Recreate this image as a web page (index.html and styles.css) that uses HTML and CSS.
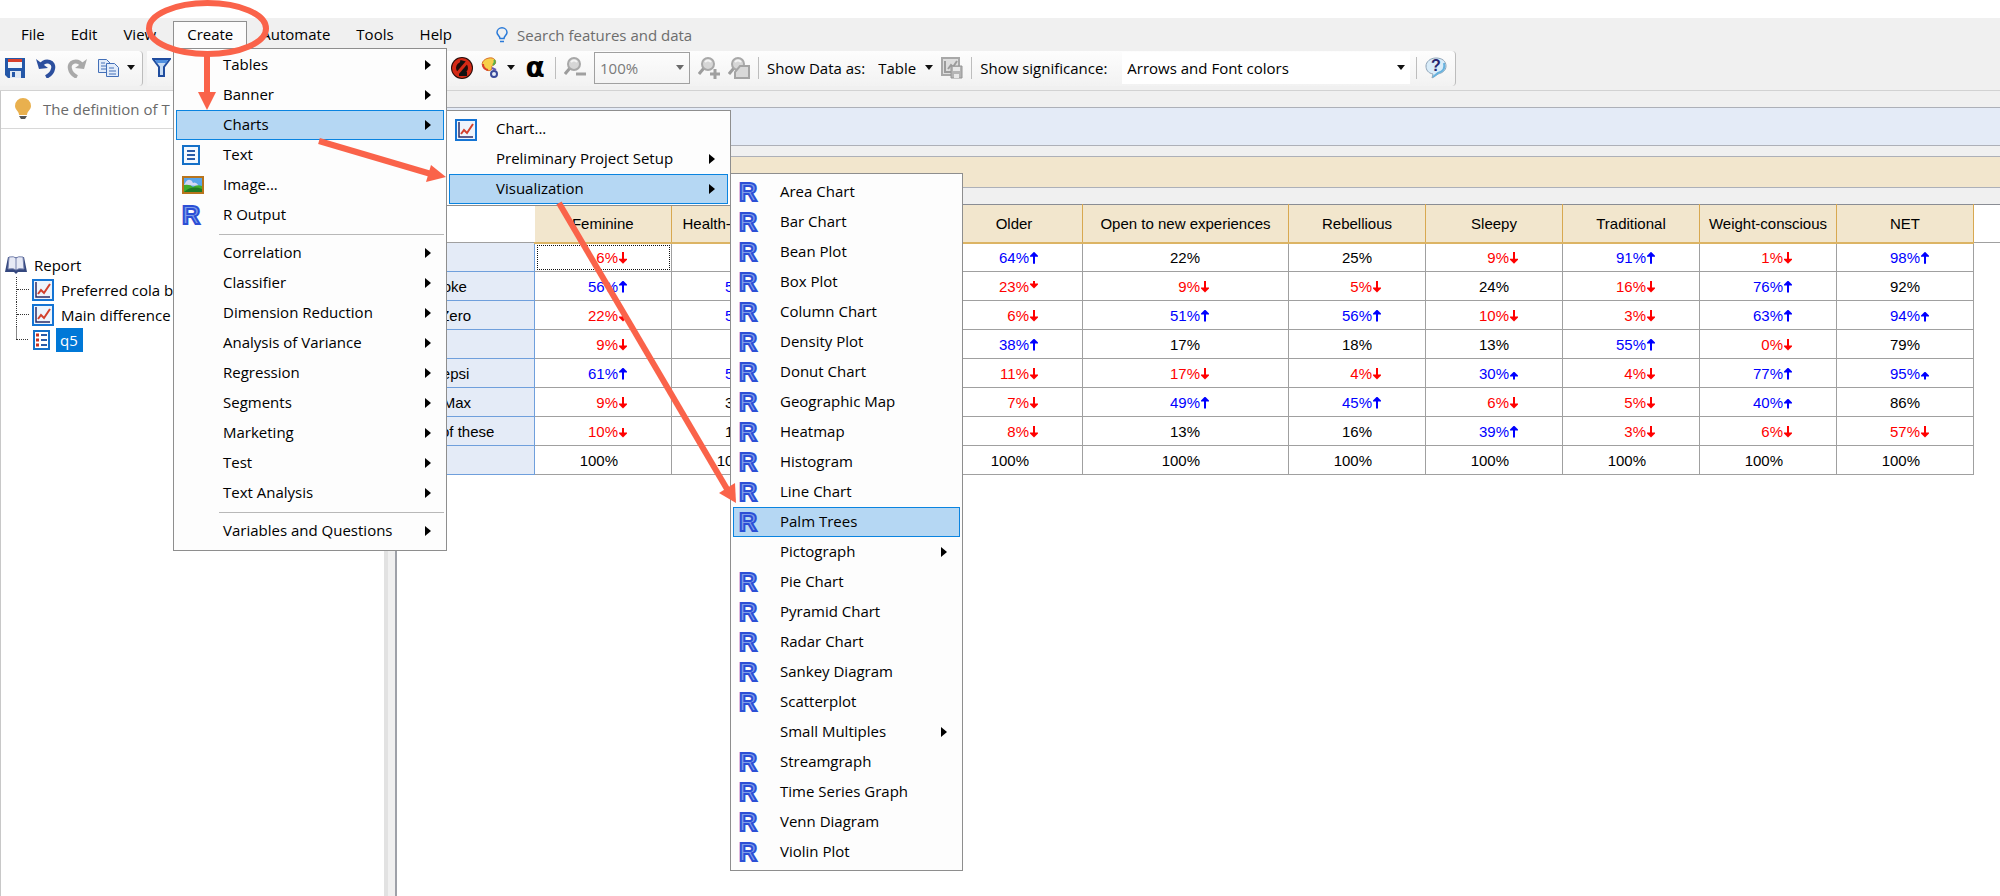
FILE: index.html
```html
<!DOCTYPE html>
<html lang="en">
<head>
    <meta charset="UTF-8">
    <meta name="viewport" content="width=device-width, initial-scale=1.0">
    <title>Report - q5</title>
    <link rel="stylesheet" href="styles.css">
</head>
<body>
    <!-- shared icons -->
    <svg class="sprite" aria-hidden="true">
        <symbol id="icon-r" viewBox="0 0 20 20">
            <text x="0" y="19" font-family="Liberation Sans" font-weight="bold" font-size="25" fill="#7f9fe8" stroke="#2c4fd6" stroke-width="2">R</text>
        </symbol>
        <symbol id="icon-chart" viewBox="0 0 22 22">
            <rect x="1" y="1" width="20" height="20" fill="#eef4fc" stroke="#1474d4" stroke-width="2"/>
            <path d="M4 3v15h14" fill="none" stroke="#2c2c66" stroke-width="1.5"/>
            <path d="M6 15l3-4 3 3 6-9" fill="none" stroke="#d2402c" stroke-width="2"/>
        </symbol>
        <symbol id="icon-lens" viewBox="0 0 22 22">
            <path d="M1 17l5-6" stroke="#9c9c9c" stroke-width="3"/>
            <circle cx="10" cy="7" r="6" fill="#d6d6d6" stroke="#a8a8a8" stroke-width="2"/>
            <path d="M7 5q3-3 6 0" fill="none" stroke="#f4f4f4" stroke-width="2"/>
        </symbol>
    </svg>

    <div class="app">
        <nav class="menubar">
            <button>File</button>
            <button>Edit</button>
            <button>View</button>
            <button class="open">Create</button>
            <button>Automate</button>
            <button>Tools</button>
            <button>Help</button>
            <label class="search">
                <svg width="12" height="16" viewBox="0 0 12 16" fill="none" stroke="#2a7ad8" stroke-width="1.5"><path d="M4 11.500C4 9 1 8 1 5.500a5 4.700 0 0 1 10 0C11 8 8 9 8 11.500z"/><path d="M4 14.500h4"/></svg>
                <input type="text" placeholder="Search features and data" aria-label="Search features and data">
            </label>
        </nav>

        <div class="toolbar">
            <div class="strip strip-edit">
                <button aria-label="Save">
                    <svg width="20" height="20" viewBox="0 0 20 20"><path d="M0 0h20v20H3l-3-3z" fill="#2558a8"/><path d="M3 1h14v9H3z" fill="#f2f6fc"/><path d="M3 1h14v3H3z" fill="#d8402c"/><path d="M5 13h11v7H5z" fill="#dfe8f4"/><path d="M7 14h3v5H7z" fill="#2558a8"/></svg>
                </button>
                <button aria-label="Undo">
                    <svg width="20" height="20" viewBox="0 0 20 20"><path d="M4 8c6-8 15-4 13 3q-1 5-7 8" fill="none" stroke="#2c4f9e" stroke-width="4"/><path d="M0 1l3 10 9-1z" fill="#2c4f9e"/></svg>
                </button>
                <button aria-label="Redo">
                    <svg width="20" height="20" viewBox="0 0 20 20"><path d="M16 8C10 0 1 4 3 11q1 5 7 8" fill="none" stroke="#a9a9a9" stroke-width="4"/><path d="M20 1l-3 10-9-1z" fill="#a9a9a9"/></svg>
                </button>
                <button aria-label="Copy">
                    <svg width="21" height="20" viewBox="0 0 21 20" fill="#e2ecfa" stroke="#4470b8"><path d="M.5 1.500h8l4 4v9H.5z"/><path d="M3 5h4M3 8h6M3 11h6"/><path d="M8.500 5.500h8l4 4v9h-12z"/><path d="M11 10h5M11 13h7M11 16h7"/></svg>
                </button>
                <button class="caret" aria-label="Copy options"></button>
            </div>
            <div class="strip strip-data">
                <button aria-label="Filter">
                    <svg width="19" height="20" viewBox="0 0 19 20"><path d="M1 1h17l-6 8v9H7V9z" fill="#c6dbf4" stroke="#1f4c9e" stroke-width="2"/><path d="M3 2h13l-2 3H5z" fill="#4f8fe0"/></svg>
                </button>
                <div class="hidden-tools"></div>
                <button aria-label="Hide">
                    <svg width="22" height="22" viewBox="0 0 22 22"><circle cx="11" cy="11" r="11" fill="#240a08"/><circle cx="11" cy="11" r="8" fill="none" stroke="#d42a16" stroke-width="4"/><path d="M9 5l4 1v11M8 17h8" fill="none" stroke="#111" stroke-width="4"/><path d="M17 4L5 18" stroke="#d42a16" stroke-width="3"/></svg>
                </button>
                <button aria-label="Colors">
                    <svg width="18" height="22" viewBox="0 0 18 22"><path d="M8 1c5-1 8 3 6 6-2 2-4 1-3 4 0 3-5 4-8 0-4-4-1-9 5-10z" fill="#f7cf4a" stroke="#d8702a"/><path d="M2 7q0 5 5 6" fill="none" stroke="#d8402c" stroke-width="2"/><path d="M13 3q2 2-1 5" fill="none" stroke="#58b04a" stroke-width="2"/><circle cx="13" cy="17" r="3" fill="#e8eef8" stroke="#3a4a9a" stroke-width="2"/><path d="M11 11l4 2" stroke="#6a58b0" stroke-width="2"/></svg>
                </button>
                <button class="caret" aria-label="Color options"></button>
                <button class="alpha" aria-label="Significance">α</button>
                <i class="sep"></i>
                <button aria-label="Zoom out">
                    <svg width="22" height="22"><use href="#icon-lens"/><path d="M12 17h10" stroke="#a0a0a0" stroke-width="3"/></svg>
                </button>
                <span class="select zoom">
                    <select aria-label="Zoom" disabled><option>100%</option></select>
                </span>
                <button aria-label="Zoom in">
                    <svg width="22" height="22"><use href="#icon-lens"/><path d="M12 17h10M17 12v10" stroke="#a0a0a0" stroke-width="3"/></svg>
                </button>
                <button aria-label="Zoom to selection">
                    <svg width="22" height="22"><use href="#icon-lens"/><path d="M12 9h9v12H7v-6z" fill="#d8d8d8" stroke="#a4a4a4" stroke-width="2"/></svg>
                </button>
                <i class="sep"></i>
                <label for="showAs">Show Data as:</label>
                <span class="select show-as">
                    <select id="showAs"><option>Table</option></select>
                </span>
                <button aria-label="Save chart">
                    <svg width="22" height="22" viewBox="0 0 22 22"><path d="M1 1h17v17H1z" fill="#dedede" stroke="#a8a8a8" stroke-width="2"/><path d="M4 4v11h6M7 12l3-4 2 2 4-6" fill="none" stroke="#9c9c9c" stroke-width="2"/><path d="M10 9h11v12H10z" fill="#b4b4b4" stroke="#949494"/><path d="M12 10h7v4h-7zM13 17h5v4h-5z" fill="#e8e8e8"/></svg>
                </button>
                <i class="sep"></i>
                <label for="significance">Show significance:</label>
                <span class="select significance">
                    <select id="significance"><option>Arrows and Font colors</option></select>
                </span>
                <i class="sep"></i>
                <button aria-label="Help">
                    <svg width="22" height="22" viewBox="0 0 22 22"><path d="M11 1c6 0 10 3 10 8s-4 7-8 8l-6 4 1-4c-5-1-7-4-7-8s4-8 10-8z" fill="#d9ecf9" stroke="#8fa4b8"/><path d="M19 6q2 8-6 10l-5 4" fill="none" stroke="#67b2de" stroke-width="2"/><text x="11" y="14" text-anchor="middle" font-family="Liberation Sans" font-weight="bold" font-size="16" fill="#25256e">?</text></svg>
                </button>
            </div>
        </div>

        <div class="workspace">
            <aside class="report-panel">
                <div class="tip">
                    <svg width="16" height="22" viewBox="0 0 16 22"><path d="M4 17c0-4-4-5-4-9a8 8 0 0 1 16 0c0 4-4 5-4 9z" fill="#e9b04e"/><path d="M4 18h8l-2 3H6z" fill="#555"/></svg>
                    <span>The definition of T</span>
                </div>
                <div class="tree">
                    <div class="tree-root">
                        <svg width="22" height="18" viewBox="0 0 22 18"><path d="M3 1h16l3 15h-9l-2 2-2-2H0z" fill="#34477e"/><path d="M4 1q5-1 7 1 2-2 7-1l1 12q-6-1-8 1-2-2-8-1z" fill="#e6e9f5" stroke="#7480ac"/><path d="M11 2v12" stroke="#7480ac"/></svg>
                        <span>Report</span>
                    </div>
                    <ul>
                        <li><svg width="22" height="22"><use href="#icon-chart"/></svg><span>Preferred cola b</span></li>
                        <li><svg width="22" height="22"><use href="#icon-chart"/></svg><span>Main difference</span></li>
                        <li>
                            <svg width="22" height="22" viewBox="0 0 22 22"><path d="M3 2h15v18H3z" fill="#fff" stroke="#1470c8" stroke-width="2"/><path d="M5 6h3M5 11h3M5 16h3" stroke="#c8321e" stroke-width="3"/><path d="M10 6h6M10 11h6M10 16h6" stroke="#2a5ca8" stroke-width="2"/></svg>
                            <span class="selected">q5</span>
                        </li>
                    </ul>
                </div>
            </aside>
            <div class="splitter"></div>

            <main class="output">
                <div class="band band-blue"></div>
                <div class="band band-tan"></div>
                <table class="data">
                    <colgroup>
                        <col class="col-label"><col><col><col><col><col class="col-wide"><col><col><col><col><col><col class="col-rest">
                    </colgroup>
                    <thead>
                        <tr><td></td><th>Feminine</th><th>Health-conscious</th><th></th><th>Older</th><th>Open to new experiences</th><th>Rebellious</th><th>Sleepy</th><th>Traditional</th><th>Weight-conscious</th><th>NET</th><td></td></tr>
                    </thead>
                    <tbody>
                        <tr><th>Coke</th><td class="down focus">6%</td><td></td><td></td><td class="up">64%</td><td>22%</td><td>25%</td><td class="down">9%</td><td class="up">91%</td><td class="down">1%</td><td class="up">98%</td></tr>
                        <tr><th>Diet Coke</th><td class="up">56%</td><td class="up">53%</td><td></td><td class="down short">23%</td><td class="down">9%</td><td class="down">5%</td><td>24%</td><td class="down">16%</td><td class="up">76%</td><td>92%</td></tr>
                        <tr><th>Coke Zero</th><td class="down medium">22%</td><td class="up">53%</td><td></td><td class="down">6%</td><td class="up">51%</td><td class="up">56%</td><td class="down">10%</td><td class="down">3%</td><td class="up">63%</td><td class="up medium">94%</td></tr>
                        <tr><th>Pepsi</th><td class="down">9%</td><td></td><td></td><td class="up">38%</td><td>17%</td><td>18%</td><td>13%</td><td class="up">55%</td><td class="down">0%</td><td>79%</td></tr>
                        <tr><th>Diet Pepsi</th><td class="up">61%</td><td class="up">53%</td><td></td><td class="down">11%</td><td class="down">17%</td><td class="down">4%</td><td class="up short">30%</td><td class="down">4%</td><td class="up">77%</td><td class="up short">95%</td></tr>
                        <tr><th>Pepsi Max</th><td class="down">9%</td><td>33%</td><td></td><td class="down">7%</td><td class="up">49%</td><td class="up">45%</td><td class="down">6%</td><td class="down">5%</td><td class="up medium">40%</td><td>86%</td></tr>
                        <tr><th>None of these</th><td class="down medium">10%</td><td>13%</td><td></td><td class="down">8%</td><td>13%</td><td>16%</td><td class="up">39%</td><td class="down">3%</td><td class="down">6%</td><td class="down">57%</td></tr>
                        <tr><th>NET</th><td>100%</td><td>100%</td><td></td><td>100%</td><td>100%</td><td>100%</td><td>100%</td><td>100%</td><td>100%</td><td>100%</td></tr>
                    </tbody>
                </table>
            </main>
        </div>
    </div>

    <!-- Create menu -->
    <div class="menu menu-create">
        <button class="sub">Tables</button>
        <button class="sub">Banner</button>
        <button class="sub active">Charts</button>
        <button><svg width="18" height="20" viewBox="0 0 18 20"><path d="M1 1h16v18H1z" fill="#f4f9ff" stroke="#1470c8" stroke-width="2"/><path d="M5 6h8M5 10h8M5 14h8" stroke="#2a5ca8" stroke-width="2"/></svg>Text</button>
        <button><svg width="22" height="20" viewBox="0 0 22 20"><path d="M0 1h22v18H0z" fill="#b8741c"/><path d="M2 3h18v14H2z" fill="#58a4ea"/><path d="M2 10q3-6 6-5 2 0 3 3 3-2 6 3z" fill="#d4d8f4"/><path d="M2 10q6-1 9 2 4-3 9-1v6H2z" fill="#3fae2c"/><path d="M2 17q8-7 18-3v3z" fill="#1f7a24"/></svg>Image...</button>
        <button><svg width="20" height="20"><use href="#icon-r"/></svg>R Output</button>
        <hr>
        <button class="sub">Correlation</button>
        <button class="sub">Classifier</button>
        <button class="sub">Dimension Reduction</button>
        <button class="sub">Analysis of Variance</button>
        <button class="sub">Regression</button>
        <button class="sub">Segments</button>
        <button class="sub">Marketing</button>
        <button class="sub">Test</button>
        <button class="sub">Text Analysis</button>
        <hr>
        <button class="sub">Variables and Questions</button>
    </div>

    <!-- Charts submenu -->
    <div class="menu menu-charts">
        <button><svg width="22" height="22"><use href="#icon-chart"/></svg>Chart...</button>
        <button class="sub">Preliminary Project Setup</button>
        <button class="sub active">Visualization</button>
    </div>

    <!-- Visualization submenu -->
    <div class="menu menu-visualization">
        <button><svg width="20" height="20"><use href="#icon-r"/></svg>Area Chart</button>
        <button><svg width="20" height="20"><use href="#icon-r"/></svg>Bar Chart</button>
        <button><svg width="20" height="20"><use href="#icon-r"/></svg>Bean Plot</button>
        <button><svg width="20" height="20"><use href="#icon-r"/></svg>Box Plot</button>
        <button><svg width="20" height="20"><use href="#icon-r"/></svg>Column Chart</button>
        <button><svg width="20" height="20"><use href="#icon-r"/></svg>Density Plot</button>
        <button><svg width="20" height="20"><use href="#icon-r"/></svg>Donut Chart</button>
        <button><svg width="20" height="20"><use href="#icon-r"/></svg>Geographic Map</button>
        <button><svg width="20" height="20"><use href="#icon-r"/></svg>Heatmap</button>
        <button><svg width="20" height="20"><use href="#icon-r"/></svg>Histogram</button>
        <button><svg width="20" height="20"><use href="#icon-r"/></svg>Line Chart</button>
        <button class="active"><svg width="20" height="20"><use href="#icon-r"/></svg>Palm Trees</button>
        <button class="sub">Pictograph</button>
        <button><svg width="20" height="20"><use href="#icon-r"/></svg>Pie Chart</button>
        <button><svg width="20" height="20"><use href="#icon-r"/></svg>Pyramid Chart</button>
        <button><svg width="20" height="20"><use href="#icon-r"/></svg>Radar Chart</button>
        <button><svg width="20" height="20"><use href="#icon-r"/></svg>Sankey Diagram</button>
        <button><svg width="20" height="20"><use href="#icon-r"/></svg>Scatterplot</button>
        <button class="sub">Small Multiples</button>
        <button><svg width="20" height="20"><use href="#icon-r"/></svg>Streamgraph</button>
        <button><svg width="20" height="20"><use href="#icon-r"/></svg>Time Series Graph</button>
        <button><svg width="20" height="20"><use href="#icon-r"/></svg>Venn Diagram</button>
        <button><svg width="20" height="20"><use href="#icon-r"/></svg>Violin Plot</button>
    </div>

    <!-- callout ring and arrows -->
    <svg class="callouts" width="760" height="520" viewBox="0 0 760 520" aria-hidden="true">
        <g fill="none" stroke="#fa634a" stroke-width="6">
            <ellipse cx="207.500" cy="28.500" rx="58.500" ry="25.500"/>
            <path d="M207 55v40"/>
            <path d="M319 141l112 33"/>
            <path d="M559 203l168 286"/>
        </g>
        <g fill="#fa634a">
            <path d="M198 92h18l-9 18z"/>
            <path d="M431 165l15 12-20 5z"/>
            <path d="M719 493l16-10 1 20z"/>
        </g>
    </svg>
</body>
</html>
```

FILE: styles.css
```css
* {
    margin: 0;
    padding: 0;
    box-sizing: border-box;
}

body {
    position: relative;
    background: #fff;
    color: #000;
    font-family: "Open Sans", "Noto Sans", sans-serif;
    font-size: 15px;
}

button,
input,
select {
    border: none;
    background: none;
    color: inherit;
    font: inherit;
}

.sprite {
    display: none;
}

.app {
    display: flex;
    flex-direction: column;
    min-height: 100vh;
    padding-top: 18px;
}

/* menu bar */
.menubar {
    display: flex;
    align-items: flex-end;
    height: 33px;
    padding: 0 8px 3px;
    background: #f0f0f0;
}

.menubar button {
    height: 27px;
    padding: 0 13px 2px;
}

.menubar .open {
    margin-left: 4px;
    border: 1px solid #909090;
    border-bottom: none;
    background: #fcfcfc;
}

.menubar .open + button {
    margin-left: 1px;
}

.search {
    display: flex;
    align-items: center;
    gap: 9px;
    height: 27px;
    margin-left: 31px;
}

.search input {
    width: 240px;
}

.search input::placeholder {
    color: #6d6d6d;
    opacity: 1;
}

/* toolbar */
.toolbar {
    display: flex;
    gap: 4px;
    height: 40px;
    padding-bottom: 4px;
    border-bottom: 1px solid #d2d2d2;
    background: #f0f0f0;
}

.strip {
    display: flex;
    align-items: center;
    padding-bottom: 2px;
    border-right: 1px solid #bcbcbc;
    border-radius: 0 4px 4px 0;
    background: linear-gradient(#fdfdfd, #f2f2f2);
}

.strip svg {
    display: block;
}

.strip-edit {
    width: 143px;
    gap: 11px;
    padding-left: 5px;
}

.strip-edit .caret {
    margin-left: -3px;
}

.strip-data {
    gap: 8px;
    padding-left: 5px;
    padding-right: 8px;
}

.hidden-tools {
    width: 264px;
}

.caret {
    width: 0;
    height: 0;
    border: 4px solid transparent;
    border-top: 5px solid #111;
    border-bottom: none;
}

.alpha {
    width: 24px;
    font-family: "DejaVu Sans", sans-serif;
    font-size: 28px;
    font-weight: bold;
    line-height: 28px;
}

.sep {
    width: 1px;
    height: 22px;
    background: #bdbdbd;
}

.select {
    display: flex;
    align-items: center;
    position: relative;
    height: 32px;
}

.select select {
    width: 100%;
    height: 100%;
    padding: 0 5px;
    appearance: none;
    opacity: 1;
}

.select::after {
    content: "";
    position: absolute;
    right: 5px;
    border: 4px solid transparent;
    border-top: 5px solid #111;
    border-bottom: none;
    pointer-events: none;
}

.zoom {
    width: 96px;
    border: 1px solid #a0a0a0;
    color: #7a7a7a;
}

.zoom::after {
    border-top-color: #6a6a6a;
}

.show-as {
    width: 60px;
}

.show-as::after {
    right: 0;
}

.significance {
    width: 288px;
    margin-left: 7px;
    background: #fff;
}

.significance + .sep {
    margin-left: -2px;
}

/* report panel */
.workspace {
    display: flex;
    flex: 1;
}

.report-panel {
    width: 384px;
    border-left: 1px solid #c8c8c8;
}

.splitter {
    width: 11px;
    border-left: 4px solid #e2e2e2;
    background: #f0f0f0;
}

.tip {
    display: flex;
    align-items: center;
    gap: 12px;
    height: 38px;
    padding: 0 0 2px 14px;
    border-bottom: 1px solid #d8d8d8;
    color: #6a6a6a;
}

.tree {
    padding: 123px 0 0 4px;
}

.tree-root,
.tree li {
    display: flex;
    align-items: center;
    height: 25px;
}

.tree-root {
    gap: 7px;
}

.tree ul {
    margin-left: 11px;
    list-style: none;
}

.tree li {
    gap: 3px;
    border-left: 1px dotted #333;
}

.tree li::before {
    content: "";
    width: 12px;
    border-top: 1px dotted #333;
}

.tree li span {
    padding: 0 5px 0 4px;
    line-height: 24px;
}

.tree li .selected {
    background: #0078d7;
    color: #fff;
}

.tree li:last-child {
    border-left: none;
    background: linear-gradient(#888, #888) 0 0 / 1px 12px no-repeat;
}

/* output area */
.output {
    flex: 1;
    padding-top: 16px;
    border-left: 2px solid #9ea1a8;
    background: linear-gradient(#f0f0f0, #f0f0f0) 0 0 / 100% 113px no-repeat;
}

.band {
    border: solid #adb0b8;
    border-width: 1px 0;
}

.band-blue {
    height: 39px;
    margin-bottom: 10px;
    background: #e4ebf7;
}

.band-tan {
    height: 32px;
    margin-bottom: 16px;
    background: #f2e6cd;
}

.data {
    width: 100%;
    border-collapse: collapse;
    table-layout: fixed;
    font-family: "Liberation Sans", Arial, sans-serif;
    font-size: 15px;
}

.data col {
    width: 137px;
}

.data .col-wide {
    width: 206px;
}

.data .col-rest {
    width: auto;
}

.data thead tr {
    height: 38px;
    border-top: 1px solid #8a8d94;
}

.data thead td {
    border-bottom: 1px solid #a0a0a0;
    background: #fff;
}

.data thead th {
    border-right: 1px solid #d8a850;
    border-bottom: 2px solid #dcb464;
    background: #f2e6cd;
    font-weight: normal;
    white-space: nowrap;
}

.data tbody tr {
    height: 29px;
}

.data tbody th {
    padding-left: 3px;
    border: 1px solid #6f9fdc;
    background: #e4ebf7;
    font-weight: normal;
    text-align: left;
}

.data tbody td {
    padding-right: 44px;
    border: 1px solid #a0a0a0;
    text-align: right;
    white-space: nowrap;
}

.data tbody td:nth-child(6) {
    padding-right: 79px;
}

.data tbody td::after {
    content: "";
    display: inline-block;
    width: 8px;
    height: 12px;
    margin-left: 1px;
    vertical-align: -1px;
}

.data .up {
    color: #00f;
}

.data .down {
    color: #f00;
}

/* significance arrows, longer for stronger results */
.data .up::after {
    background: #00f;
    clip-path: polygon(4px 0, 8px 4px, 8px 5px, 5px 5px, 5px 100%, 3px 100%, 3px 5px, 0 5px, 0 4px);
}

.data .down::after {
    background: #f00;
    clip-path: polygon(3px 0, 5px 0, 5px calc(100% - 5px), 8px calc(100% - 5px), 8px calc(100% - 4px), 4px 100%, 0 calc(100% - 4px), 0 calc(100% - 5px), 3px calc(100% - 5px));
}

.data .medium::after {
    height: 10px;
}

.data .short::after {
    height: 8px;
}

.data .down.short::after {
    vertical-align: 3px;
}

.data .focus {
    outline: 1px dotted #111;
    outline-offset: -3px;
}

/* drop-down menus */
.menu {
    position: absolute;
    display: flex;
    flex-direction: column;
    border: 1px solid #8e8e8e;
    background: #fdfdfd;
}

.menu-create {
    top: 48px;
    left: 173px;
    width: 274px;
    padding: 1px 2px 4px;
}

.menu-charts {
    top: 110px;
    left: 446px;
    width: 285px;
    padding: 3px 2px 1px;
}

.menu-visualization {
    top: 173px;
    left: 730px;
    width: 233px;
    padding: 3px 2px;
}

.menu button {
    display: flex;
    align-items: center;
    position: relative;
    height: 30px;
    padding: 0 0 2px 46px;
    border: 1px solid transparent;
    text-align: left;
}

.menu button svg {
    position: absolute;
    top: 4px;
    left: 5px;
}

.menu .active {
    border-color: #0a84e0;
    background: #b5d7f3;
}

.menu .sub::after {
    content: "";
    margin: 2px 12px 0 auto;
    border: 5px solid transparent;
    border-left: 6px solid #000;
    border-right: none;
}

.menu hr {
    margin: 4px 0 3px 43px;
    border: none;
    border-top: 1px solid #b8b8b8;
}

.callouts {
    position: absolute;
    top: 0;
    left: 0;
    pointer-events: none;
}
```
